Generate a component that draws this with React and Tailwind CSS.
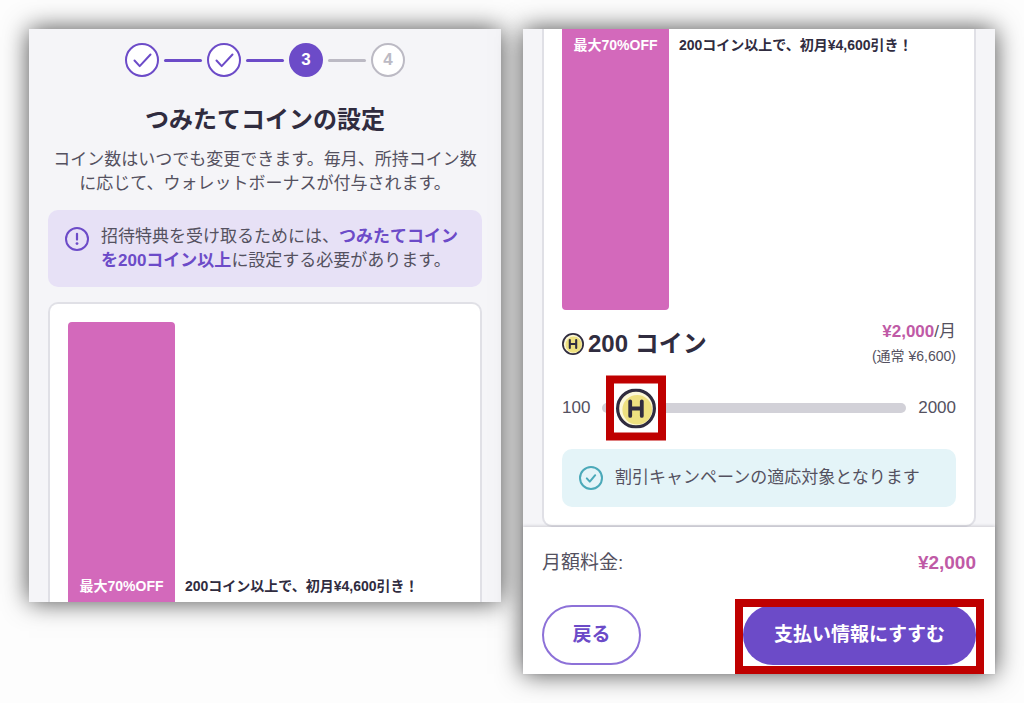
import React, { useState } from 'react';

const MIN = 100;
const MAX = 2000;

function Check({ className }) {
  return (
    <svg viewBox="0 0 34 34" className={className} fill="none" stroke="currentColor" strokeWidth="2" strokeLinecap="round" strokeLinejoin="round" aria-hidden="true">
      <path d="M9.5 17.5l5.2 5.6L25.5 11.5" />
    </svg>
  );
}

function Coin({ className }) {
  return (
    <svg viewBox="0 0 40 40" className={className} aria-hidden="true">
      <circle cx="20" cy="20" r="18.4" fill="#fbf7d8" stroke="#302c3f" strokeWidth="3.2" />
      <circle cx="21.2" cy="21.2" r="14.8" fill="#eee080" />
      <path d="M14.2 12.8v14.6M25.8 12.8v14.6M14.2 20h11.6" stroke="#302c3f" strokeWidth="3.8" strokeLinecap="round" fill="none" />
    </svg>
  );
}

function Steps({ current }) {
  const steps = [1, 2, 3, 4];
  return (
    <ol className="flex items-center justify-center gap-[5px] text-[17px] font-bold">
      {steps.map((n) => (
        <React.Fragment key={n}>
          {n > 1 && (
            <li
              aria-hidden="true"
              className={`w-[38px] h-[3px] rounded-full ${n <= current ? 'bg-[#6c4bc8]' : 'bg-[#bcbac4]'}`}
            />
          )}
          {n < current && (
            <li className="size-[34px] rounded-full border-2 border-[#6c4bc8] bg-white text-[#6c4bc8] flex items-center justify-center" aria-label={`${n}`}>
              <Check className="size-[34px] shrink-0" />
            </li>
          )}
          {n === current && (
            <li className="size-[34px] rounded-full bg-[#6c4bc8] text-white flex items-center justify-center">{n}</li>
          )}
          {n > current && (
            <li className="size-[34px] rounded-full border-2 border-[#bcbac4] bg-white text-[#bcbac4] flex items-center justify-center">{n}</li>
          )}
        </React.Fragment>
      ))}
    </ol>
  );
}

function SettingScreen() {
  return (
    <section className="bg-[#f5f5f8] px-[19px] pt-[14px] overflow-hidden shadow-[0_0_24px_rgba(0,0,0,0.7)]">
      <Steps current={3} />
      <h1 className="mt-[27px] text-2xl leading-8 font-bold text-center text-[#302c3f]">つみたてコインの設定</h1>
      <p className="mt-3 text-[17px] leading-6 text-center text-[#545160]">
        コイン数はいつでも変更できます。毎月、所持コイン数に応じて、ウォレットボーナスが付与されます。
      </p>

      <div className="mt-[14px] flex gap-3 rounded-[10px] bg-[#e7e1f6] px-[17px] pt-[15px] pb-[14px]">
        <svg viewBox="0 0 24 24" className="mt-[2px] size-6 shrink-0 text-[#6c4bc8]" fill="none" stroke="currentColor" strokeWidth="2" strokeLinecap="round" aria-hidden="true">
          <circle cx="12" cy="12" r="11" />
          <path d="M12 6.8v5.8" strokeWidth="2.2" />
          <circle cx="12" cy="16.6" r="1.4" fill="currentColor" stroke="none" />
        </svg>
        <p className="text-[17px] leading-6 text-[#545160]">
          招待特典を受け取るためには、<strong className="font-bold text-[#6c4bc8]">つみたてコインを200コイン以上</strong>に設定する必要があります。
        </p>
      </div>

      <div className="mt-[15px] flex rounded-t-[10px] border-2 border-b-0 border-[#e0e0e6] bg-white px-[18px] pt-[18px]">
        <div className="flex h-[280px] w-[107px] shrink-0 items-end justify-center rounded-t bg-[#d369bb] pb-[6px] text-[14px] leading-5 font-bold text-white">
          最大70%OFF
        </div>
        <p className="self-end pb-[6px] pl-[10px] text-[14px] leading-5 font-bold text-[#302c3f]">
          200コイン以上で、初月¥4,600引き！
        </p>
      </div>
    </section>
  );
}

function PlanScreen() {
  const [coins, setCoins] = useState(200);
  const ratio = (coins - MIN) / (MAX - MIN);
  const price = `¥${(coins * 10).toLocaleString('en-US')}`;

  return (
    <section className="bg-[#f5f5f8] shadow-[0_0_24px_rgba(0,0,0,0.7)]">
      <div className="px-[19px]">
        <div className="rounded-b-[10px] border-2 border-t-0 border-[#e0e0e6] bg-white px-[18px] pb-[18px]">
          <div className="flex">
            <div className="flex h-[281px] w-[107px] shrink-0 justify-center rounded-b bg-[#d369bb] pt-[6px] text-[14px] leading-5 font-bold text-white">
              最大70%OFF
            </div>
            <p className="pt-[6px] pl-[10px] text-[14px] leading-5 font-bold text-[#302c3f]">
              200コイン以上で、初月¥4,600引き！
            </p>
          </div>

          <div className="mt-[10px] flex items-center justify-between">
            <h2 className="flex items-center gap-1 text-2xl leading-8 font-bold text-[#302c3f]">
              <Coin className="size-[22px]" />
              {coins} コイン
            </h2>
            <div className="text-right text-[#545160]">
              <p className="text-[17px] leading-6"><span className="font-bold text-[#bf5aa6]">{price}</span>/月</p>
              <p className="text-[14px] leading-6">(通常 ¥6,600)</p>
            </div>
          </div>

          <div className="mt-[29px] flex items-center gap-3 text-[17px] leading-[22px] text-[#545160]">
            <label htmlFor="coins">{MIN}</label>
            <div className="relative flex flex-1 items-center">
              <input
                id="coins"
                type="range"
                min={MIN}
                max={MAX}
                step="100"
                value={coins}
                onChange={(e) => setCoins(Number(e.target.value))}
                className="h-[10px] w-full appearance-none rounded-full bg-[#d2d1d8] [&::-webkit-slider-thumb]:size-10 [&::-webkit-slider-thumb]:appearance-none [&::-webkit-slider-thumb]:opacity-0"
              />
              <div
                className="pointer-events-none absolute top-1/2 flex h-[65px] w-[60px] -translate-x-1/2 -translate-y-1/2 items-center justify-center border-8 border-[#bf0000] bg-white"
                style={{ left: `calc(20px + (100% - 40px) * ${ratio})` }}
              >
                <Coin className="size-10 shrink-0" />
              </div>
            </div>
            <span>{MAX}</span>
          </div>

          <div className="mt-[30px] flex items-center gap-3 rounded-[10px] bg-[#e4f4f8] px-[17px] py-[17px] text-[17px] leading-6 text-[#545160]">
            <svg viewBox="0 0 24 24" className="size-6 shrink-0 text-[#4ba9b9]" fill="none" stroke="currentColor" strokeWidth="2" strokeLinecap="round" strokeLinejoin="round" aria-hidden="true">
              <circle cx="12" cy="12" r="11" />
              <path d="M7.8 12.4l3 3.2 5.4-6.4" />
            </svg>
            割引キャンペーンの適応対象となります
          </div>
        </div>
      </div>

      <div className="bg-white px-[19px] pt-[22px] pb-[9px] shadow-[0_-1px_3px_rgba(48,44,63,0.2)]">
        <div className="flex items-center justify-between text-[19px] leading-7">
          <span className="text-[#545160]">月額料金:</span>
          <span className="font-bold text-[#bf5aa6]">{price}</span>
        </div>
        <div className="mt-7 flex items-center justify-between text-[19px] font-bold">
          <button type="button" className="h-[60px] w-[99px] rounded-full border-2 border-[#8d71d8] bg-white text-[#6c4bc8]">戻る</button>
          <div className="relative">
            <button type="button" className="h-[60px] w-[233px] rounded-full bg-[#6c4bc8] text-white">支払い情報にすすむ</button>
            <div className="pointer-events-none absolute -inset-x-2 -top-[6px] -bottom-[9px] border-8 border-[#bf0000]" />
          </div>
        </div>
      </div>
    </section>
  );
}

function App() {
  return (
    <main
      lang="ja"
      className="grid min-h-screen grid-cols-2 items-start gap-[22px] bg-[#fdfdfd] p-[29px] font-['Liberation_Sans','Noto_Sans_CJK_JP',sans-serif]"
    >
      <SettingScreen />
      <PlanScreen />
    </main>
  );
}

export default App;
